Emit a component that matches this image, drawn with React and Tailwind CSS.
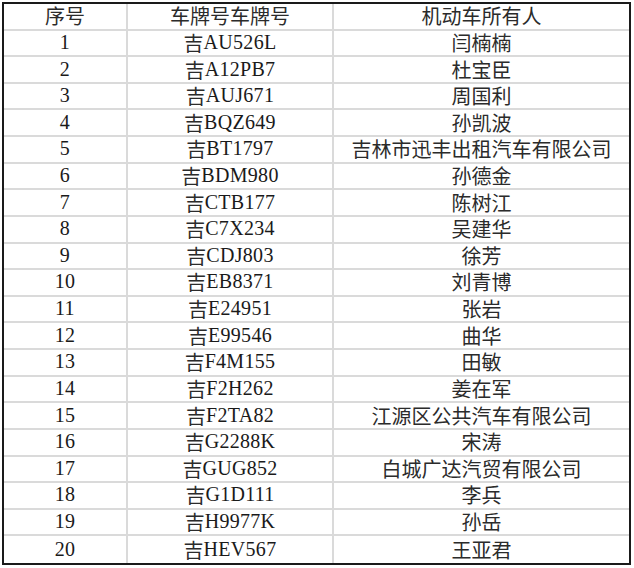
import React from "react";

const rows = [
  ["1", "AU526L", "闫楠楠"],
  ["2", "A12PB7", "杜宝臣"],
  ["3", "AUJ671", "周国利"],
  ["4", "BQZ649", "孙凯波"],
  ["5", "BT1797", "吉林市迅丰出租汽车有限公司"],
  ["6", "BDM980", "孙德金"],
  ["7", "CTB177", "陈树江"],
  ["8", "C7X234", "吴建华"],
  ["9", "CDJ803", "徐芳"],
  ["10", "EB8371", "刘青博"],
  ["11", "E24951", "张岩"],
  ["12", "E99546", "曲华"],
  ["13", "F4M155", "田敏"],
  ["14", "F2H262", "姜在军"],
  ["15", "F2TA82", "江源区公共汽车有限公司"],
  ["16", "G2288K", "宋涛"],
  ["17", "GUG852", "白城广达汽贸有限公司"],
  ["18", "G1D111", "李兵"],
  ["19", "H9977K", "孙岳"],
  ["20", "HEV567", "王亚君"],
];

const cjk = "font-['Noto_Sans_CJK_SC'] text-[20px] leading-none text-[#2b2b2b]";
const latin =
  "inline-block font-['Liberation_Serif'] text-[20px] tracking-[0.3px] leading-none text-[#1a1a1a] -translate-y-[1px]";

function Cell({ children, last, bottom }) {
  return (
    <div
      className={
        "flex items-center justify-center " +
        (last ? "" : "border-r-2 border-r-[#dadada] ") +
        (bottom ? "" : "border-b-2 border-b-[#dadada]")
      }
    >
      {children}
    </div>
  );
}

export default function App() {
  return (
    <div className="w-[634px] h-[568px] bg-white">
      <div className="ml-[2px] mt-[2px] w-[629px] h-[563px] border-2 border-[#1a1a1a] grid grid-cols-[124px_206px_1fr] grid-rows-[repeat(21,1fr)]">
        <Cell>
          <span className={cjk}>序号</span>
        </Cell>
        <Cell>
          <span className={cjk}>车牌号车牌号</span>
        </Cell>
        <Cell last>
          <span className={cjk}>机动车所有人</span>
        </Cell>
        {rows.map((r, i) => {
          const bottom = i === rows.length - 1;
          return (
            <React.Fragment key={r[0]}>
              <Cell bottom={bottom}>
                <span className={latin}>{r[0]}</span>
              </Cell>
              <Cell bottom={bottom}>
                <span className="flex items-center">
                  <span className={cjk}>吉</span>
                  <span className={latin}>{r[1]}</span>
                </span>
              </Cell>
              <Cell last bottom={bottom}>
                <span className={cjk}>{r[2]}</span>
              </Cell>
            </React.Fragment>
          );
        })}
      </div>
    </div>
  );
}
